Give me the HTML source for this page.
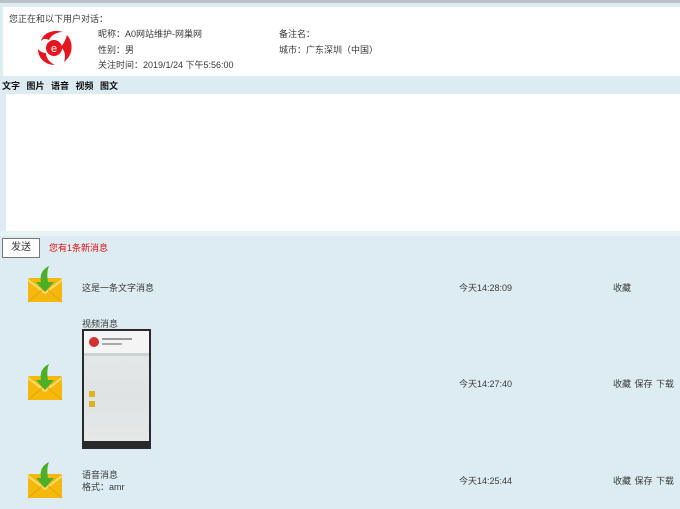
<!DOCTYPE html>
<html><head><meta charset="utf-8"><style>
*{margin:0;padding:0;box-sizing:border-box}
body{width:680px;height:509px;background:#dcecf2;font-family:"Liberation Sans","Noto Sans CJK SC",sans-serif;font-size:9px;color:#3a3a3a;position:relative;overflow:hidden}
.a{position:absolute;white-space:nowrap}
</style></head><body>
<div class="a" style="left:0;top:0;width:680px;height:3px;background:#b9c3c7"></div>
<div class="a" style="left:3px;top:7px;width:677px;height:69px;background:#fff"></div>
<div class="a" style="left:9px;top:12px">您正在和以下用户对话：</div>
<svg class="a" style="left:33px;top:27px" width="42" height="42" viewBox="0 0 42 42">
<path d="M8 14 C10 6 20 2 30 5 C24 5 18 8 16 13 C12 11 10 12 8 14Z" fill="#e5161e"/>
<path d="M34 8 C41 16 40 28 31 35 C33 29 32 24 28 20 C31 16 33 12 34 8Z" fill="#e5161e"/>
<path d="M5 22 C5 31 12 38 22 38 C16 35 13 31 13 26 C9 26 7 24 5 22Z" fill="#e5161e"/>
<circle cx="21" cy="21" r="8" fill="#e5161e"/>
<text x="21" y="25" font-size="11" fill="#fff" text-anchor="middle" font-family="Liberation Sans">e</text>
</svg>
<div class="a" style="left:98px;top:27px">昵称：A0网站维护-网巢网</div>
<div class="a" style="left:98px;top:43px">性别：男</div>
<div class="a" style="left:98px;top:58px">关注时间：2019/1/24 下午5:56:00</div>
<div class="a" style="left:279px;top:27px">备注名：</div>
<div class="a" style="left:279px;top:43px">城市：广东深圳（中国）</div>
<div class="a" style="left:2px;top:79px;font-weight:bold;color:#111;word-spacing:4px">文字 图片 语音 视频 图文</div>
<div class="a" style="left:6px;top:94px;width:674px;height:137px;background:#fff"></div>
<div class="a" style="left:0;top:231px;width:680px;height:5px;background:#e8f4f4"></div>
<div class="a" style="left:2px;top:238px;width:38px;height:20px;background:#fff;border:1px solid #777;text-align:center;line-height:18px;font-size:10px">发送</div>
<div class="a" style="left:49px;top:241px;color:#e01010">您有1条新消息</div>

<svg width="0" height="0" style="position:absolute"><defs><g id="env">
<rect x="1" y="12" width="34" height="24" rx="2" fill="#f5b80c"/>
<path d="M1 14 L18 27 L35 14" fill="none" stroke="#f9dc70" stroke-width="2"/>
<path d="M1 36 L15 24 M35 36 L21 24" stroke="#e5a500" stroke-width="1"/>
<path d="M22 0 C14 4 13 10 14 16 L9 16 L18 26 L27 16 L21 16 C20 10 20 5 22 0Z" fill="#4caf28"/>
</g></defs></svg>
<svg class="a" style="left:27px;top:266px" width="36" height="37"><use href="#env"/></svg>
<svg class="a" style="left:27px;top:364px" width="36" height="37"><use href="#env"/></svg>
<svg class="a" style="left:27px;top:462px" width="36" height="37"><use href="#env"/></svg>

<div class="a" style="left:82px;top:281px">这是一条文字消息</div>
<div class="a" style="left:459px;top:281px">今天14:28:09</div>
<div class="a" style="left:613px;top:281px">收藏</div>

<div class="a" style="left:82px;top:317px">视频消息</div>
<div class="a" style="left:82px;top:329px;width:69px;height:120px;background:#2a2a2a;padding:2px 2px 8px 2px">
<div style="width:100%;height:100%;background:linear-gradient(#e8eaea,#dfe3e3 60%,#e6e8e8);position:relative">
<div style="position:absolute;left:0;top:0;width:100%;height:22px;background:#f4f4f4"></div>
<div style="position:absolute;left:5px;top:6px;width:10px;height:10px;border-radius:50%;background:#d03030"></div>
<div style="position:absolute;left:18px;top:7px;width:30px;height:2px;background:#999"></div>
<div style="position:absolute;left:18px;top:12px;width:20px;height:2px;background:#aaa"></div>
<div style="position:absolute;left:0;top:22px;width:100%;height:3px;background:#c9d3d6"></div>
<div style="position:absolute;left:5px;top:60px;width:6px;height:6px;background:#e0b020"></div>
<div style="position:absolute;left:5px;top:70px;width:6px;height:6px;background:#e0b020"></div>
</div></div>
<div class="a" style="left:459px;top:377px">今天14:27:40</div>
<div class="a" style="left:613px;top:377px;word-spacing:1px">收藏 保存 下载</div>

<div class="a" style="left:82px;top:468px">语音消息</div>
<div class="a" style="left:82px;top:480px">格式：amr</div>
<div class="a" style="left:459px;top:474px">今天14:25:44</div>
<div class="a" style="left:613px;top:474px;word-spacing:1px">收藏 保存 下载</div>
</body></html>
